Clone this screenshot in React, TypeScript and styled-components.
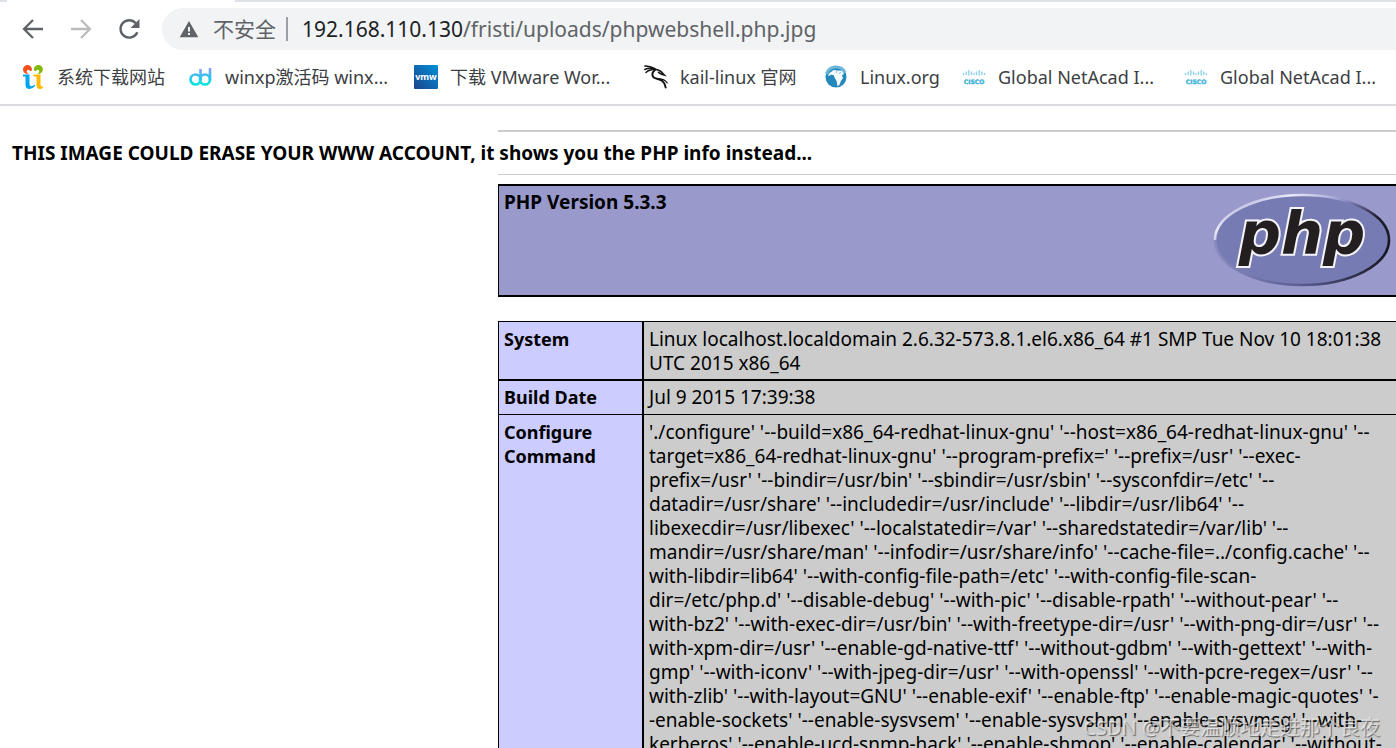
import React from "react";
import styled, { createGlobalStyle } from "styled-components";

const GlobalStyle = createGlobalStyle`
  * { box-sizing: border-box; }
  html, body, #root { height: 100%; }
  body {
    margin: 0;
    overflow: hidden;
    background: #ffffff;
    color: #000000;
    font-family: "Noto Sans", "Noto Sans CJK SC", sans-serif;
    font-size: 18px;
    line-height: 24px;
  }
`;

const Page = styled.div`
  position: relative;
  display: flex;
  flex-direction: column;
  height: 100%;
  overflow: hidden;
`;

const TabStrip = styled.div`
  display: flex;
  flex: none;
  height: 2px;
  background: #dee1e6;
`;

const ActiveTab = styled.div`
  width: 228px;
  margin-left: 7px;
  background: #ffffff;
`;

const Toolbar = styled.div`
  display: flex;
  flex: none;
  align-items: center;
  padding: 6px 0 6px 20px;
`;

const NavButtons = styled.div`
  display: flex;
  gap: 24px;
  width: 142px;
`;

const IconButton = styled.button<{ $dim?: boolean }>`
  display: flex;
  padding: 0;
  border: 0;
  background: none;
  color: ${(p) => (p.$dim ? "#babcbe" : "#5f6368")};
`;

const AddressBar = styled.form`
  display: flex;
  flex: 1;
  align-items: center;
  height: 42px;
  padding-left: 17px;
  border-radius: 21px 0 0 21px;
  background: #f1f3f4;
  font-size: 21px;
  line-height: 32px;
`;

const SecurityButton = styled.button`
  display: flex;
  align-items: center;
  gap: 14px;
  width: 109px;
  height: 24px;
  padding: 0;
  border: 0;
  border-right: 2px solid #9aa0a6;
  background: none;
  color: #5f6368;
  font: inherit;
  white-space: nowrap;
`;

const UrlInput = styled.input<{ $host?: boolean }>`
  ${(p) => (p.$host ? "field-sizing: content; margin-left: 14px;" : "flex: 1; min-width: 0;")}
  height: 32px;
  padding: 0;
  border: 0;
  outline: 0;
  background: none;
  color: ${(p) => (p.$host ? "#202124" : "#5f6368")};
  font: inherit;
`;

const BookmarkBar = styled.nav`
  display: flex;
  flex: none;
  align-items: center;
  height: 50px;
  padding: 0 0 6px 21px;
  border-bottom: 2px solid #dadce0;
`;

const Bookmark = styled.a<{ $width: number }>`
  display: flex;
  flex: none;
  align-items: center;
  gap: 12px;
  width: ${(p) => p.$width}px;
  color: #3c4043;
  text-decoration: none;
  white-space: nowrap;
`;

const Content = styled.main`
  flex: 1;
  min-height: 0;
  padding-top: 24px;
  overflow: hidden;
`;

const Rule = styled.hr<{ $thick?: boolean }>`
  height: ${(p) => (p.$thick ? 2 : 1)}px;
  margin: 0 0 0 498px;
  border: 0;
  background: #cccccc;
`;

const Warning = styled.h3`
  margin: 0;
  padding: 9px 12px;
  font-size: 19px;
  white-space: nowrap;
`;

const Info = styled.section`
  margin: 9px -2px 0 498px;
`;

const VersionBox = styled.header`
  display: flex;
  justify-content: space-between;
  height: 113px;
  padding: 4px 5px;
  border: solid #000000;
  border-width: 2px 1px;
  background: #9999cc;
`;

const Version = styled.h1`
  margin: 0;
  font-size: 19px;
  line-height: 24px;
`;

const InfoTable = styled.table`
  width: 100%;
  margin-top: 24px;
  border: 1px solid #000000;
  border-spacing: 0;
  background: #cccccc;
`;

const Label = styled.th<{ $line: number }>`
  width: 145px;
  padding: ${(p) => (p.$line === 1 ? "4px 5px 5px" : "5px 5px 4px")};
  border: solid #000000;
  border-width: 0 2px ${(p) => p.$line}px 0;
  background: #ccccff;
  text-align: left;
  vertical-align: top;
`;

const Value = styled.td<{ $line: number }>`
  padding: ${(p) => (p.$line === 1 ? "4px 5px 5px" : "5px 5px 4px")};
  border-bottom: ${(p) => p.$line}px solid #000000;
  font-size: 19px;
  vertical-align: top;
`;

const Line = styled.span`
  display: block;
  white-space: nowrap;
`;

const Watermark = styled.div`
  position: absolute;
  right: 16px;
  bottom: 6px;
  color: rgba(255, 255, 255, 0.6);
  font-size: 20px;
  line-height: 28px;
  text-shadow: 1px 1px 1px rgba(0, 0, 0, 0.5);
  white-space: nowrap;
`;

const BackIcon = () => (
  <svg width="24" height="24" viewBox="0 0 24 24" fill="none" stroke="currentColor" strokeWidth="2.3">
    <path d="M23 12H4.500M13 3L4 12l9 9" />
  </svg>
);

const ForwardIcon = () => (
  <svg width="24" height="24" viewBox="0 0 24 24" fill="none" stroke="currentColor" strokeWidth="2.300">
    <path d="M3 12H21.500M13 3L22 12l-9 9" />
  </svg>
);

const ReloadIcon = () => (
  <svg width="26" height="24" viewBox="0 0 26 24" fill="none">
    <path d="M21.300 15.200A8.700 8.700 0 1 1 19.800 6.200" stroke="currentColor" strokeWidth="2.400" />
    <path d="M23.500 2v9h-9z" fill="currentColor" />
  </svg>
);

const WarnIcon = () => (
  <svg width="20" height="18" viewBox="0 0 20 18">
    <path d="M10 1L19.300 17.300H.7z" fill="#5f6368" />
    <path d="M9 7h2v4.500H9zM9 13h2v2H9z" fill="#f1f3f4" />
  </svg>
);

const SiteIcon = () => (
  <svg width="24" height="24" viewBox="0 0 24 24">
    <path d="M11 4.500A4.500 4.500 0 1 0 7.500 8.900Q5 7.500 6 5.200 8 3.800 9.500 6.200 10.800 6 11 4.500z" fill="#f4511e" />
    <path d="M12.800 4.500A4.500 4.500 0 1 1 16.500 8.900Q19 7.500 18 5.200 16 3.800 14.500 6.200 13 6 12.800 4.500z" fill="#7fba00" />
    <path d="M2 9.500h6.500V19q0 2.300 2 2.300 1.500 0 3.500-1.800v1.500Q11.500 24 8.500 24 4.500 24 4.500 20v-8.500H2z" fill="#00a4ef" />
    <path d="M12.500 9.500h7V20q0 1.800 2.500 1.800v1Q20.500 24 19 24q-3.500 0-3.500-4v-8.500h-3z" fill="#ffb900" />
  </svg>
);

const DdIcon = () => (
  <svg width="24" height="24" viewBox="0 0 24 24" fill="none" strokeWidth="2.600">
    <defs>
      <linearGradient id="dd" x1="0" y1="3" x2="0" y2="21" gradientUnits="userSpaceOnUse">
        <stop stopColor="#8b9cf8" />
        <stop offset=".6" stopColor="#19cdee" />
        <stop offset="1" stopColor="#0be8d8" />
      </linearGradient>
    </defs>
    <g stroke="url(#dd)">
      <circle cx="6.500" cy="14.500" r="5" />
      <circle cx="16" cy="14.500" r="5" />
      <path d="M11.500 4v11M21 3v12" />
    </g>
  </svg>
);

const VmwIcon = () => (
  <svg width="24" height="24" viewBox="0 0 24 24">
    <defs>
      <linearGradient id="vm" x1="1" y1="0" x2="0" y2="1">
        <stop stopColor="#0091da" />
        <stop offset="1" stopColor="#1d428a" />
      </linearGradient>
    </defs>
    <rect width="24" height="24" rx="1" fill="url(#vm)" />
    <text x="12" y="15" textAnchor="middle" fill="#fff" fontFamily="Noto Sans" fontWeight="700" fontSize="9">vmw</text>
  </svg>
);

const KaliIcon = () => (
  <svg width="24" height="24" viewBox="0 0 24 24" fill="none" stroke="#111" strokeLinecap="round">
    <path d="M.8 1C4.500 .8 7.500 1.700 11 3.600M.8 4.500C4 3 8 3 11 4M2 7.500C4.500 5 7.500 4.400 11 4.500" strokeWidth="1.400" />
    <path d="M11 4.200c3 .3 5.200 1 7 3.300l2.300 2.500-2.800-.7-3-2" strokeWidth="1.600" />
    <path d="M11 5C7.500 7.500 7.500 12 11 13.200c4 1.300 9.500 1.200 10.700 9.300" strokeWidth="1.900" />
    <path d="M14 13.800c4-.2 7 .8 9.200 4" strokeWidth="1.200" />
  </svg>
);

const GlobeIcon = () => (
  <svg width="24" height="24" viewBox="0 0 24 24">
    <circle cx="12" cy="12" r="10.500" fill="#2388bc" />
    <path d="M2.500 9A10 10 0 0 1 21 7.500" fill="none" stroke="#6db6d9" strokeWidth="3" />
    <path d="M5 8.500l4.500-3.500 4 .5 4.500.3 2 3-2 1.500 1 3-2 2.500-1.500 4-2 1.500-.8-5-2-3.500-1.200-2.800-2.500-.2-3 1.500z" fill="#f7fcff" />
    <path d="M13 5.500l-1 2.500M16.500 7l-1 2" stroke="#79bddd" strokeWidth="1" />
  </svg>
);

const CiscoIcon = () => (
  <svg width="24" height="24" viewBox="0 0 24 24">
    <path d="M1.500 8.500v1M4.200 7v2.500M6.800 5.500v4.500M9.500 7v2.500M12 8.500v1M14.500 7v2.500M17.200 5.500v4.500M19.800 7v2.500M22.500 8.500v1" stroke="#8fd1e8" strokeWidth="1.400" strokeLinecap="round" />
    <text x="12" y="18.500" textAnchor="middle" fill="#3fb2da" stroke="#3fb2da" strokeWidth=".4" fontFamily="DejaVu Sans" fontWeight="700" fontSize="6">CISCO</text>
  </svg>
);

const PhpLogo = () => (
  <svg width="180" height="100" viewBox="0 0 180 100" role="img" aria-label="PHP logo">
    <defs>
      <linearGradient id="rim" x1="0" y1=".2" x2="1" y2=".75">
        <stop stopColor="#9c9ccd" />
        <stop offset=".25" stopColor="#e9e9f8" />
        <stop offset=".5" stopColor="#9da0cf" />
        <stop offset=".62" stopColor="#6a6ca0" />
        <stop offset=".85" stopColor="#1c1b28" />
      </linearGradient>
      <linearGradient id="rimLow" x1="0" y1="0" x2="1" y2="0">
        <stop stopColor="#8a8cc0" />
        <stop offset=".5" stopColor="#595c91" />
        <stop offset="1" stopColor="#16151f" />
      </linearGradient>
    </defs>
    <ellipse cx="90" cy="50" rx="87" ry="45" fill="#777bb3" />
    <path d="M3 50A87 45 0 0 1 177 50" fill="none" stroke="url(#rim)" strokeWidth="2.600" />
    <path d="M3 50A87 45 0 0 0 177 50" fill="none" stroke="url(#rimLow)" strokeWidth="2.600" />
    <g
      fontFamily="DejaVu Sans"
      fontWeight="700"
      fontStyle="italic"
      fontSize="59"
      textAnchor="middle"
      strokeLinejoin="miter"
    >
      <text x="90" y="64" fill="#231f20" stroke="#f4f4fa" strokeWidth="4" paintOrder="stroke">
        php
      </text>
    </g>
  </svg>
);

const bookmarks = [
  { label: "系统下载网站", width: 168, Icon: SiteIcon },
  { label: "winxp激活码 winx...", width: 225, Icon: DdIcon },
  { label: "下载 VMware Wor...", width: 230, Icon: VmwIcon },
  { label: "kail-linux 官网", width: 180, Icon: KaliIcon },
  { label: "Linux.org", width: 138, Icon: GlobeIcon },
  { label: "Global NetAcad I...", width: 222, Icon: CiscoIcon },
  { label: "Global NetAcad I...", width: 222, Icon: CiscoIcon },
];

const rows = [
  {
    label: ["System"],
    line: 2,
    value: [
      "Linux localhost.localdomain 2.6.32-573.8.1.el6.x86_64 #1 SMP Tue Nov 10 18:01:38",
      "UTC 2015 x86_64",
    ],
  },
  { label: ["Build Date"], line: 1, value: ["Jul 9 2015 17:39:38"] },
  {
    label: ["Configure", "Command"],
    line: 2,
    value: [
      "'./configure' '--build=x86_64-redhat-linux-gnu' '--host=x86_64-redhat-linux-gnu' '--",
      "target=x86_64-redhat-linux-gnu' '--program-prefix=' '--prefix=/usr' '--exec-",
      "prefix=/usr' '--bindir=/usr/bin' '--sbindir=/usr/sbin' '--sysconfdir=/etc' '--",
      "datadir=/usr/share' '--includedir=/usr/include' '--libdir=/usr/lib64' '--",
      "libexecdir=/usr/libexec' '--localstatedir=/var' '--sharedstatedir=/var/lib' '--",
      "mandir=/usr/share/man' '--infodir=/usr/share/info' '--cache-file=../config.cache' '--",
      "with-libdir=lib64' '--with-config-file-path=/etc' '--with-config-file-scan-",
      "dir=/etc/php.d' '--disable-debug' '--with-pic' '--disable-rpath' '--without-pear' '--",
      "with-bz2' '--with-exec-dir=/usr/bin' '--with-freetype-dir=/usr' '--with-png-dir=/usr' '--",
      "with-xpm-dir=/usr' '--enable-gd-native-ttf' '--without-gdbm' '--with-gettext' '--with-",
      "gmp' '--with-iconv' '--with-jpeg-dir=/usr' '--with-openssl' '--with-pcre-regex=/usr' '--",
      "with-zlib' '--with-layout=GNU' '--enable-exif' '--enable-ftp' '--enable-magic-quotes' '-",
      "-enable-sockets' '--enable-sysvsem' '--enable-sysvshm' '--enable-sysvmsg' '--with-",
      "kerberos' '--enable-ucd-snmp-hack' '--enable-shmop' '--enable-calendar' '--without-",
    ],
  },
];

export default function App() {
  return (
    <Page>
      <GlobalStyle />
      <TabStrip>
        <ActiveTab />
      </TabStrip>
      <Toolbar>
        <NavButtons>
          <IconButton aria-label="Back"><BackIcon /></IconButton>
          <IconButton aria-label="Forward" $dim><ForwardIcon /></IconButton>
          <IconButton aria-label="Reload"><ReloadIcon /></IconButton>
        </NavButtons>
        <AddressBar>
          <SecurityButton type="button">
            <WarnIcon />
            不安全
          </SecurityButton>
          <UrlInput $host aria-label="Host" defaultValue="192.168.110.130" />
          <UrlInput aria-label="Path" defaultValue="/fristi/uploads/phpwebshell.php.jpg" />
        </AddressBar>
      </Toolbar>
      <BookmarkBar>
        {bookmarks.map(({ label, width, Icon }, i) => (
          <Bookmark key={i} href="#" $width={width}>
            <Icon />
            {label}
          </Bookmark>
        ))}
      </BookmarkBar>
      <Content>
        <Rule $thick />
        <Warning>THIS IMAGE COULD ERASE YOUR WWW ACCOUNT, it shows you the PHP info instead...</Warning>
        <Rule />
        <Info>
          <VersionBox>
            <Version>PHP Version 5.3.3</Version>
            <PhpLogo />
          </VersionBox>
          <InfoTable>
            <tbody>
              {rows.map((row) => (
                <tr key={row.label[0]}>
                  <Label scope="row" $line={row.line}>
                    {row.label.map((text) => <Line key={text}>{text}</Line>)}
                  </Label>
                  <Value $line={row.line}>
                    {row.value.map((text) => <Line key={text}>{text}</Line>)}
                  </Value>
                </tr>
              ))}
            </tbody>
          </InfoTable>
        </Info>
      </Content>
      <Watermark>CSDN @不要温顺地走进那个良夜</Watermark>
    </Page>
  );
}
